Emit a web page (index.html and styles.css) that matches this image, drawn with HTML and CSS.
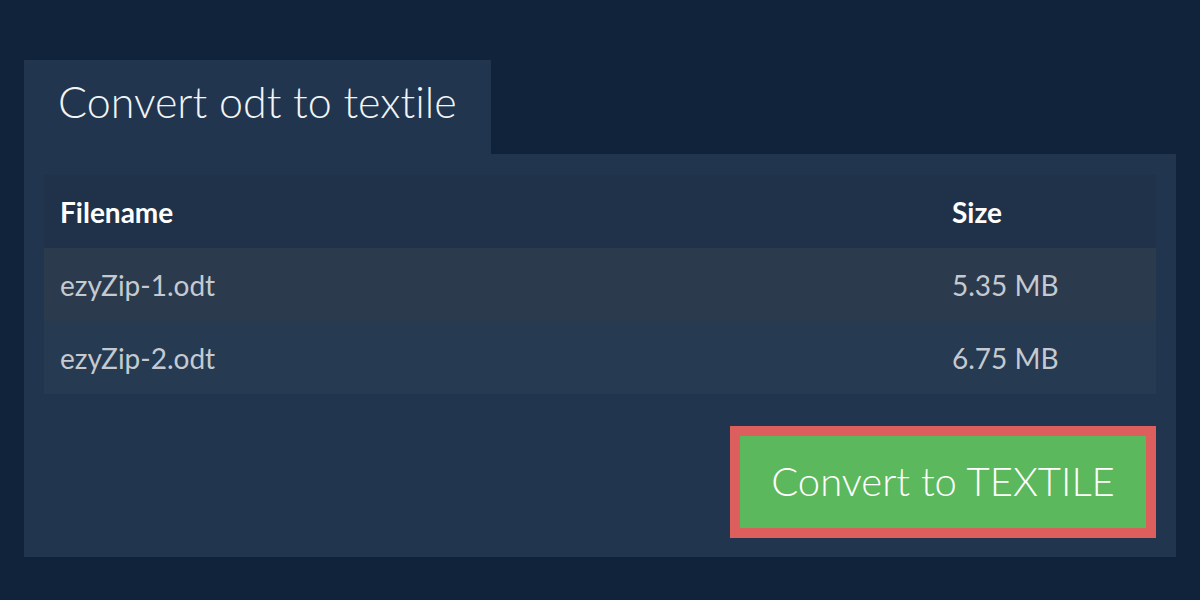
FILE: index.html
```html
<!DOCTYPE html>
<html>
<head>
<meta charset="utf-8">
<link rel="stylesheet" href="styles.css">
</head>
<body>
<div class="wrap">
  <div class="tab">Convert odt to textile</div>
  <div class="panel">
    <div class="table">
      <div class="row head"><div class="c1">Filename</div><div class="c2">Size</div></div>
      <div class="row odd"><div class="c1">ezyZip-1.odt</div><div class="c2">5.35 MB</div></div>
      <div class="row even"><div class="c1">ezyZip-2.odt</div><div class="c2">6.75 MB</div></div>
    </div>
    <div class="actions">
      <div class="btn">Convert to TEXTILE</div>
    </div>
  </div>
</div>
</body>
</html>
```
FILE: styles.css
```css
html, body { margin: 0; padding: 0; }
body {
  background: #10233a;
  font-family: Lato, "Open Sans", sans-serif;
  font-variant-ligatures: none;
  width: 1200px;
  height: 600px;
  overflow: hidden;
}
.wrap {
  padding: 60px 24px 0 24px;
}
.tab {
  display: inline-block;
  width: 467px;
  height: 94px;
  box-sizing: border-box;
  background: #21364e;
  color: #f2f4f6;
  font-weight: 300;
  font-size: 43px;
  padding: 17px 0 0 34px;
  line-height: 50px;
}
.panel {
  background: #21364e;
  padding: 21px 20px 20px 20px;
  height: 403px;
  box-sizing: border-box;
}
.table { display: flex; flex-direction: column; }
.row {
  display: flex;
  height: 73px;
  align-items: center;
  font-size: 28px;
}
.c1 { flex: 0 0 908px; padding-left: 16px; box-sizing: border-box; }
.c2 { flex: 1; }
.head { background: #1f3249; color: #ffffff; font-weight: 700; }
.odd { background: #2b3b4d; color: #c5cad1; }
.even { background: #263a51; color: #c5cad1; }
.actions {
  display: flex;
  justify-content: flex-end;
  padding-top: 32px;
}
.btn {
  width: 426px;
  height: 112px;
  box-sizing: border-box;
  border: 10px solid #dc5f5e;
  background: #5cb85c;
  color: #ffffff;
  font-size: 40px;
  font-weight: 300;
  display: flex;
  align-items: center;
  justify-content: center;
  padding-bottom: 2px;
}
```
